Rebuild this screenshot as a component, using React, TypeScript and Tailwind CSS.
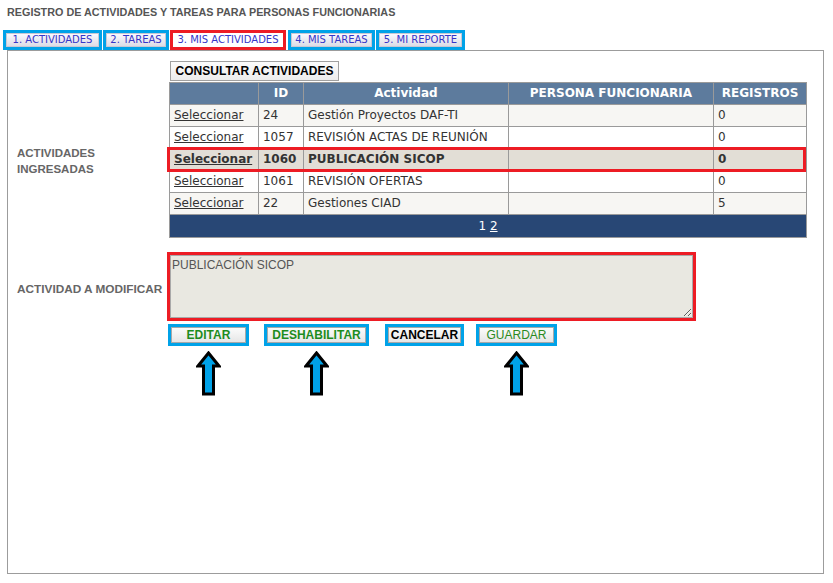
import React from "react";

const verdana = "font-['DejaVu_Sans',Verdana,sans-serif]";
const arial = "font-['Liberation_Sans',Arial,sans-serif]";

type Row = { id: string; name: string; persona: string; registros: string; selected?: boolean };

const rows: Row[] = [
  { id: "24", name: "Gestión Proyectos DAF-TI", persona: "", registros: "0" },
  { id: "1057", name: "REVISIÓN ACTAS DE REUNIÓN", persona: "", registros: "0" },
  { id: "1060", name: "PUBLICACIÓN SICOP", persona: "", registros: "0", selected: true },
  { id: "1061", name: "REVISIÓN OFERTAS", persona: "", registros: "0" },
  { id: "22", name: "Gestiones CIAD", persona: "", registros: "5" },
];

const tabs = [
  { label: "1. ACTIVIDADES", active: false, cls: "w-[99px]" },
  { label: "2. TAREAS", active: false, cls: "w-[66px] ml-px" },
  { label: "3. MIS ACTIVIDADES", active: true, cls: "w-[116px] ml-px" },
  { label: "4. MIS TAREAS", active: false, cls: "w-[87px] ml-[2px]" },
  { label: "5. MI REPORTE", active: false, cls: "w-[89px] ml-px" },
];

const UpArrow: React.FC = () => (
  <svg width="25" height="45" viewBox="0 0 25 45">
    <polygon
      points="12.5,2 23,15 17.5,15 17.5,43 7.5,43 7.5,15 2,15"
      fill="#00a2e8"
      stroke="#000"
      strokeWidth="3"
      strokeLinejoin="miter"
    />
  </svg>
);

const ActionButton: React.FC<{ label: string; width: string; color: string; bold?: boolean; arrow?: boolean }> = ({
  label,
  width,
  color,
  bold = true,
  arrow,
}) => (
  <div className="flex flex-col items-center">
    <div className={`border-[3px] border-[#00a2e8] h-[22px] ${width} flex`}>
      <button
        className={`flex-1 border border-[#a8a8a8] bg-gradient-to-b from-[#fbfbfb] to-[#e6e6e6] ${arial} text-[12px] leading-none ${
          bold ? "font-bold" : "font-normal"
        } ${color}`}
      >
        {label}
      </button>
    </div>
    {arrow && (
      <div className="mt-[5px]">
        <UpArrow />
      </div>
    )}
  </div>
);

const App: React.FC = () => {
  return (
    <div className="w-[833px] h-[583px] bg-white overflow-hidden">
      <div className={`pl-[7px] pt-[6px] ${arial} text-[10.8px] leading-[13px] font-bold text-[#555]`}>
        REGISTRO DE ACTIVIDADES Y TAREAS PARA PERSONAS FUNCIONARIAS
      </div>

      {/* Tabs */}
      <div className="flex pl-[3px] mt-[11px] h-[20px]">
        {tabs.map((t) => (
          <div
            key={t.label}
            className={`border-[3px] flex ${t.cls} ${t.active ? "border-[#ed1c24]" : "border-[#00a2e8]"}`}
          >
            <span
              className={`flex-1 flex items-center justify-center whitespace-nowrap border ${verdana} text-[10px] leading-none text-[#3535c8] ${
                t.active
                  ? "bg-white border-white"
                  : "bg-gradient-to-b from-[#fafafe] to-[#dcdce6] border-[#c8c8d4]"
              }`}
            >
              {t.label}
            </span>
          </div>
        ))}
      </div>

      {/* Panel */}
      <div className="ml-[7px] w-[817px] h-[524px] border border-[#9c9c9c]">
        <div className="flex">
          <div className={`w-[161px] pl-[9px] pt-[94px] ${arial} text-[11.5px] leading-[16px] font-bold text-[#666]`}>
            ACTIVIDADES
            <br />
            INGRESADAS
          </div>
          <div className="pt-[10px]">
            <button
              className={`block ml-px h-[20px] w-[169px] border border-[#a0a0a0] bg-gradient-to-b from-[#fcfcfc] to-[#ececec] ${arial} text-[12px] font-bold text-black leading-none`}
            >
              CONSULTAR ACTIVIDADES
            </button>
            <div className="relative mt-px">
              <table className={`w-[638px] border-collapse ${verdana} text-[12px] leading-[15px] text-[#333]`}>
                <colgroup>
                  <col className="w-[89px]" />
                  <col className="w-[45px]" />
                  <col className="w-[205px]" />
                  <col className="w-[206px]" />
                  <col className="w-[93px]" />
                </colgroup>
                <thead>
                  <tr className="h-[22px] bg-[#5d7b9d] text-white font-bold">
                    <th className="border border-[#9a9a9a] p-0"></th>
                    <th className="border border-[#9a9a9a] p-0">ID</th>
                    <th className="border border-[#9a9a9a] p-0">Actividad</th>
                    <th className="border border-[#9a9a9a] p-0">PERSONA FUNCIONARIA</th>
                    <th className="border border-[#9a9a9a] p-0">REGISTROS</th>
                  </tr>
                </thead>
                <tbody>
                  {rows.map((r, idx) => (
                    <tr
                      key={r.id}
                      className={`h-[22px] ${
                        r.selected ? "bg-[#e2ded6] font-bold" : idx % 2 === 0 ? "bg-[#f7f6f3]" : "bg-white"
                      }`}
                    >
                      <td className="border border-[#9a9a9a] px-[4px] py-0">
                        <a className="underline text-[#333] cursor-pointer">Seleccionar</a>
                      </td>
                      <td className="border border-[#9a9a9a] px-[4px] py-0">{r.id}</td>
                      <td className="border border-[#9a9a9a] px-[4px] py-0 whitespace-nowrap">{r.name}</td>
                      <td className="border border-[#9a9a9a] px-[4px] py-0">{r.persona}</td>
                      <td className="border border-[#9a9a9a] px-[4px] py-0">{r.registros}</td>
                    </tr>
                  ))}
                  <tr className="h-[23px] bg-[#284775] text-white">
                    <td colSpan={5} className="border border-[#9a9a9a] text-center p-0">
                      1 <span className="underline">2</span>
                    </td>
                  </tr>
                </tbody>
              </table>
              {/* selected row highlight */}
              <div className="absolute left-[-2px] top-[65px] w-[639px] h-[25px] border-[3px] border-[#ed1c24] pointer-events-none" />
            </div>
          </div>
        </div>

        <div className="flex mt-[14px]">
          <div className={`w-[159px] pl-[9px] pt-[29px] ${arial} text-[11.8px] leading-[16px] font-bold text-[#666]`}>
            ACTIVIDAD A MODIFICAR
          </div>
          <div>
            <div className="w-[529px] h-[69px] border-[3px] border-[#ed1c24] flex">
              <textarea
                readOnly
                defaultValue="PUBLICACIÓN SICOP"
                className={`flex-1 bg-[#e9e8e1] border border-[#a9a9a9] px-[1px] pt-[2px] ${arial} text-[12px] leading-[14px] text-[#555] outline-none`}
              />
            </div>
            <div className="flex items-start mt-[3px] ml-px">
              <ActionButton label="EDITAR" width="w-[81px]" color="text-[#1d8c1d]" arrow />
              <div className="ml-[15px]">
                <ActionButton label="DESHABILITAR" width="w-[105px]" color="text-[#1d8c1d]" arrow />
              </div>
              <div className="ml-[16px]">
                <ActionButton label="CANCELAR" width="w-[79px]" color="text-black" />
              </div>
              <div className="ml-[12px]">
                <ActionButton label="GUARDAR" width="w-[81px]" color="text-[#2a8a1e]" bold={false} arrow />
              </div>
            </div>
          </div>
        </div>
      </div>
    </div>
  );
};

export default App;
